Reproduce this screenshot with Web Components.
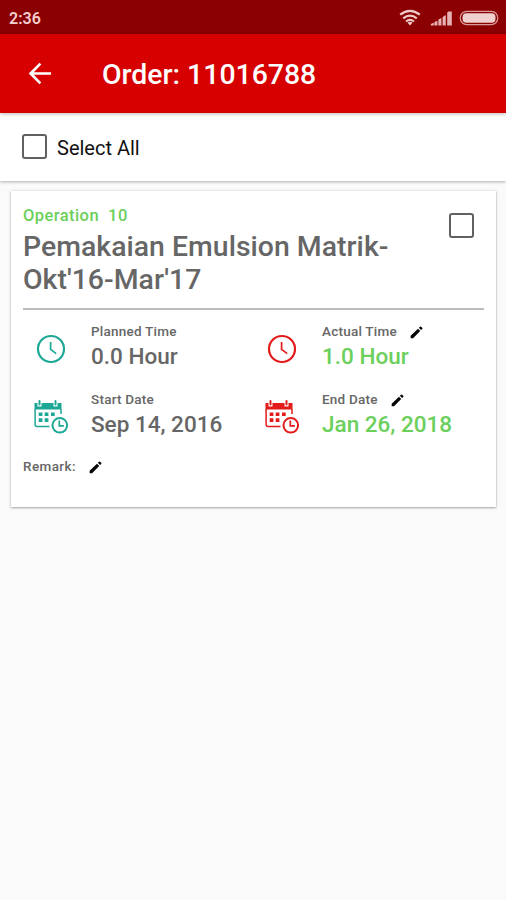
<!DOCTYPE html>
<html lang="en">
<head>
<meta charset="utf-8">
<title>Order: 11016788</title>
<style>
body { margin: 0; background: #fafafa; font-family: Roboto, "Liberation Sans", sans-serif; }
</style>
</head>
<body>
<order-page></order-page>
<script>
function define(name, html) {
  const template = document.createElement('template');
  template.innerHTML = html;
  customElements.define(name, class extends HTMLElement {
    constructor() {
      super();
      this.attachShadow({ mode: 'open' }).append(template.content.cloneNode(true));
    }
  });
}

define('status-bar', `
<style>
:host { display: flex; align-items: center; box-sizing: border-box; height: 34px; padding: 2px 7px 0 9px; background: #8b0000; color: #f3cfcf; font-size: 16px; font-weight: 600; line-height: 20px; }
.time { flex: 1; padding-top: 1px; }
svg { display: block; }
</style>
<span class="time">2:36</span>
<svg width="100" height="20" viewBox="399 7.5 100 20">
  <g fill="none" stroke="#efcaca" stroke-width="2.2">
    <path d="M400.2 14.2Q410 6.4 419.8 14.2M403.2 17.8Q410 12.3 416.8 17.8M406 21Q410 17.8 414 21"/>
  </g>
  <path d="M407.5 22.2Q410 20.4 412.5 22.2L410 25Z" fill="#efcaca"/>
  <path d="M430.8 25v-1.5l3-1.2V25zM434.4 25v-3.6l3-1.2V25zM438.4 25v-6l3-1.5V25zM442.6 25v-8.5l3.2-2V25zM447.2 25V12l1.2-1h3.4v14z" fill="#e5b3b3"/>
  <rect x="460.2" y="10.8" width="37.6" height="13.4" rx="6.7" fill="none" stroke="#d99b9b" stroke-width="1.2"/>
  <rect x="462.5" y="12.8" width="33" height="9.4" rx="4" fill="#f1d0d0"/>
</svg>`);

define('app-bar', `
<style>
:host { display: flex; align-items: center; box-sizing: border-box; height: 79px; padding: 0 0 0 28px; background: #d60000; color: #fff; font-size: 28.4px; font-weight: 500; line-height: 36px; position: relative; box-shadow: 0 1px 4px rgba(0,0,0,.28); }
svg { margin-right: 51px; flex: none; }
::slotted(*) { white-space: nowrap; padding-top: 3px; }
</style>
<svg width="23" height="23" viewBox="0 0 24 24"><path d="M24 10.6H6.1l7.8-7.9L12 .8.7 12 12 23.2l1.9-1.9-7.8-7.9H24z" fill="#fff"/></svg>
<slot></slot>`);

define('check-box', `
<style>
:host { display: block; flex: none; box-sizing: border-box; width: 25px; height: 25px; border: 2px solid #606060; border-radius: 3px; }
</style>`);

define('select-bar', `
<style>
:host { display: flex; align-items: center; box-sizing: border-box; height: 68px; padding-left: 22px; gap: 10px; background: #fff; color: #111; font-size: 20px; line-height: 26px; box-shadow: 0 1px 3px rgba(0,0,0,.3); }
check-box { margin-bottom: 2px; }
.text { padding-top: 2px; }
</style>
<check-box></check-box><span class="text"><slot></slot></span>`);

define('clock-icon', `
<style>:host { display: block; color: inherit; } svg { display: block; }</style>
<svg width="30" height="30" viewBox="0 0 30 30" fill="none" stroke="currentColor"><circle cx="15" cy="15" r="13" stroke-width="2.2"/><path d="M14.6 8v7.4l5.6 4.2" stroke-width="1.7"/></svg>`);

define('calendar-icon', `
<style>:host { display: block; color: inherit; } svg { display: block; }</style>
<svg width="36" height="36" viewBox="0 0 36 36">
  <g fill="currentColor">
    <path d="M1.5 4h3v3.5h4V4h12v3.5h4V4h4v6.5h-27z"/>
    <rect x="5.5" y="1" width="2" height="5.6" rx="1"/><rect x="21.5" y="1" width="2" height="5.6" rx="1"/>
    <path d="M5.7 13.6h3.7v3.4H5.7zM11.7 13.6h3.7v3.4h-3.7zM18 13.6h3.7v3.4H18zM5.7 19.3h3.7v3.6H5.7zM11.7 19.3h3.7v3.6h-3.7z"/>
  </g>
  <g fill="none" stroke="currentColor">
    <path d="M2.1 10v15.6q0 2 2 2H16.5M28 10v5" stroke-width="1.5"/>
    <circle cx="26.8" cy="26.3" r="7.3" stroke-width="2"/>
    <path d="M26.3 21.6v5.2h4.6" stroke-width="1.7"/>
  </g>
</svg>`);

define('edit-icon', `
<style>:host { display: block; } svg { display: block; }</style>
<svg width="13" height="13" viewBox="0 0 14 14"><path d="M.7 10.5 8.6 2.9l2.4 2.4-7.7 7.9H.7zM9.5 2l1.3-1.2q.6-.5 1.1 0l1.3 1.2q.5.6 0 1.1L11.9 4.4z" fill="#050505"/></svg>`);

define('detail-item', `
<style>
:host { display: grid; grid-template-columns: 56px 1fr; column-gap: 12px; height: 68px; color: #666; align-items: start; }
.icon { display: flex; justify-content: center; align-items: center; height: 58px; }
.label { display: flex; align-items: center; gap: 13px; height: 18px; padding-top: 2px; font-size: 13.5px; font-weight: 500; letter-spacing: .23px; line-height: 18px; white-space: nowrap; }
::slotted(edit-icon) { margin-top: 2px; }
.value { padding-top: 1px; font-size: 22.5px; font-weight: 500; line-height: 30px; white-space: nowrap; color: var(--value, #666); }
</style>
<div class="icon"><slot name="icon"></slot></div>
<div><div class="label"><slot name="label"></slot><slot name="edit"></slot></div><div class="value"><slot></slot></div></div>`);

define('operation-card', `
<style>
:host { display: block; box-sizing: border-box; height: 316px; margin: 10px 10px 0 11px; padding: 12px; background: #fff; box-shadow: 0 1px 2px rgba(0,0,0,.3), 0 0 3px rgba(0,0,0,.12); color: #666; }
.head { display: flex; justify-content: space-between; align-items: flex-start; height: 105px; border-bottom: 2px solid #bcbcbc; }
.op { height: 25px; line-height: 25px; font-size: 16.5px; font-weight: 500; letter-spacing: .43px; color: #6bcf5b; white-space: pre; }
h2 { margin: 2px 0 0; font-size: 28.4px; line-height: 33px; font-weight: 500; letter-spacing: .03px; white-space: nowrap; }
check-box { margin: 10px 10px 0 0; }
.grid { display: grid; grid-template-columns: 231px 1fr; margin-top: 10px; }
.remark { display: flex; align-items: center; gap: 13px; height: 20px; font-size: 13.5px; font-weight: 500; letter-spacing: .4px; }
.remark edit-icon { margin-top: 2px; }
.teal { color: #1da795; } .red { color: #e31b1b; }
.green { --value: #6bcf5b; }
</style>
<div class="head">
  <div><div class="op">Operation  10</div><h2>Pemakaian Emulsion Matrik-<br>Okt'16-Mar'17</h2></div>
  <check-box></check-box>
</div>
<div class="grid">
  <detail-item><clock-icon slot="icon" class="teal"></clock-icon><span slot="label">Planned Time</span>0.0 Hour</detail-item>
  <detail-item class="green"><clock-icon slot="icon" class="red"></clock-icon><span slot="label">Actual Time</span><edit-icon slot="edit"></edit-icon>1.0 Hour</detail-item>
  <detail-item><calendar-icon slot="icon" class="teal"></calendar-icon><span slot="label">Start Date</span>Sep 14, 2016</detail-item>
  <detail-item class="green"><calendar-icon slot="icon" class="red"></calendar-icon><span slot="label">End Date</span><edit-icon slot="edit"></edit-icon>Jan 26, 2018</detail-item>
</div>
<div class="remark"><span>Remark:</span><edit-icon></edit-icon></div>`);

define('order-page', `
<style>:host { display: block; height: 900px; overflow: hidden; background: #fafafa; }</style>
<status-bar></status-bar>
<app-bar><span>Order: 11016788</span></app-bar>
<select-bar>Select All</select-bar>
<operation-card></operation-card>`);
</script>
</body>
</html>
